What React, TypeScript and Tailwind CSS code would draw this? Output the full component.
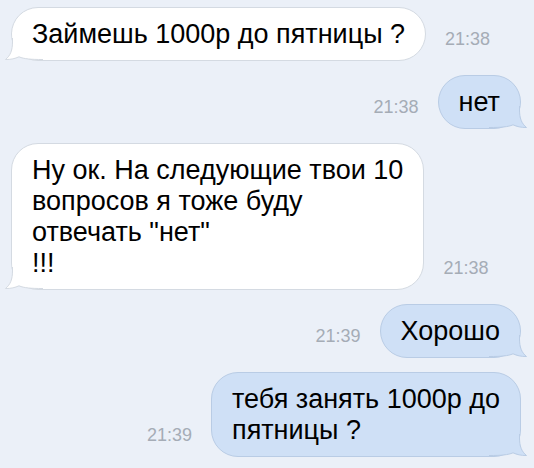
import React from 'react';

// ─── Сообщения переписки ─────────────────────────────────────────────────────

type Message = {
  id: number;
  out: boolean;
  lines: string[];
  time: string;
};

const MESSAGES: Message[] = [
  { id: 1, out: false, lines: ['Займешь 1000р до пятницы ?'], time: '21:38' },
  { id: 2, out: true, lines: ['нет'], time: '21:38' },
  {
    id: 3,
    out: false,
    lines: ['Ну ок. На следующие твои 10', 'вопросов я тоже буду', 'отвечать "нет"', '!!!'],
    time: '21:38',
  },
  { id: 4, out: true, lines: ['Хорошо'], time: '21:39' },
  { id: 5, out: true, lines: ['тебя занять 1000р до', 'пятницы ?'], time: '21:39' },
];

// ─── Хвостик пузыря (рисуется для входящего, зеркалится для исходящего) ─────

function Tail({ out }: { out: boolean }) {
  const fill = out ? '#cfe0f6' : '#ffffff';
  const stroke = out ? '#b9cce5' : '#d4dae2';
  return (
    <svg
      width="38"
      height="28"
      viewBox="0 0 38 28"
      className={out ? 'absolute -right-[7px] bottom-0 -scale-x-100' : 'absolute -left-[7px] bottom-0'}
    >
      <path
        d="M7.5 0 L7.5 10 C7.5 18 5.5 23.5 0.5 27.5 C6 27.6 10 26.6 14 24.8 C19 27 26 27.5 38 27.5 L38 0 Z"
        fill={fill}
      />
      <path
        d="M7.5 6 L7.5 10 C7.5 18 5.5 23.5 0.5 27.5 C6 27.6 10 26.6 14 24.8 C19 27 26 27.5 38 27.5"
        fill="none"
        stroke={stroke}
        strokeWidth="1"
      />
    </svg>
  );
}

function Bubble({ msg }: { msg: Message }) {
  const time = (
    <span className="mb-[12px] shrink-0 text-[18px] leading-[20px] text-[#a5acb6]">{msg.time}</span>
  );

  return (
    <div className={`flex items-end gap-[19px] ${msg.out ? 'justify-end pr-[13px]' : 'pl-[11px]'}`}>
      {msg.out && time}
      <div
        className={`relative rounded-[27px] border px-[20px] pt-[11px] pb-[10px] ${
          msg.out ? 'border-[#b9cce5] bg-[#cfe0f6]' : 'border-[#d4dae2] bg-white'
        }`}
      >
        <Tail out={msg.out} />
        <div className="relative text-[27px] leading-[31px] text-black whitespace-nowrap">
          {msg.lines.map((l, i) => (
            <div key={i}>{l}</div>
          ))}
        </div>
      </div>
      {!msg.out && time}
    </div>
  );
}

export default function App() {
  return (
    <div
      className="flex h-[468px] w-[534px] flex-col gap-[14px] overflow-hidden bg-[#ebf0f8] pt-[7px]"
      style={{ fontFamily: '"Liberation Sans", Arial, sans-serif' }}
    >
      {MESSAGES.map((m) => (
        <Bubble key={m.id} msg={m} />
      ))}
    </div>
  );
}
